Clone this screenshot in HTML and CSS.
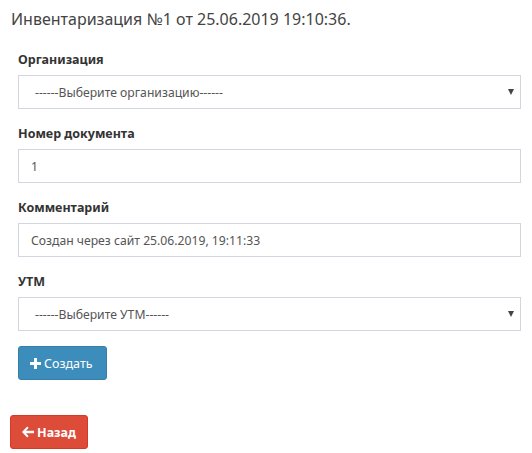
FILE: index.html
```html
<!DOCTYPE html>
<html>
<head>
<meta charset="utf-8">
<link rel="stylesheet" href="styles.css">
</head>
<body>
<div class="page">
  <h1 class="title">Инвентаризация №1 от 25.06.2019 19:10:36.</h1>
  <form class="form">
    <div class="group">
      <label class="label">Организация</label>
      <div class="select"><span>------Выберите организацию------</span><span class="caret"></span></div>
    </div>
    <div class="group">
      <label class="label">Номер документа</label>
      <div class="input">1</div>
    </div>
    <div class="group">
      <label class="label">Комментарий</label>
      <div class="input">Создан через сайт 25.06.2019, 19:11:33</div>
    </div>
    <div class="group">
      <label class="label">УТМ</label>
      <div class="select"><span>------Выберите УТМ------</span><span class="caret"></span></div>
    </div>
    <div class="actions">
      <button type="button" class="btn btn-primary"><svg class="ico" width="11" height="11" viewBox="0 0 11 11"><path d="M4 0h3v4h4v3H7v4H4V7H0V4h4z" fill="#fff"/></svg>Создать</button>
    </div>
  </form>
  <div class="back">
    <button type="button" class="btn btn-danger"><svg class="ico" width="12" height="12" viewBox="0 0 12 12"><path d="M5.2 0.6 L6.6 2 L3.9 4.7 H12 V7.3 H3.9 L6.6 10 L5.2 11.4 L0 6 Z" fill="#fff"/></svg>Назад</button>
  </div>
</div>
</body>
</html>
```
FILE: styles.css
```css
* { box-sizing: border-box; }
html, body { margin: 0; padding: 0; background: #fff; }
body {
  font-family: "Noto Sans", "Open Sans", sans-serif;
  font-size: 12.5px;
  color: #333;
}
.page { padding: 8px 10px 0 10px; }
.title {
  margin: 0 0 0 1px;
  font-size: 16px;
  font-weight: 400;
  line-height: 22px;
  color: #444;
}
.form { padding: 20px 1px 0 8px; }
.group { margin-bottom: 15px; }
.label {
  display: block;
  font-weight: 700;
  font-size: 12.5px;
  line-height: 20px;
  margin-bottom: 5px;
  color: #333;
}
.input, .select {
  height: 34px;
  border: 1px solid #d2d6de;
  padding: 0 12px;
  display: flex;
  align-items: center;
  color: #555;
  font-size: 12.2px;
}
.select { justify-content: space-between; padding: 0 6px 0 16px; }
.caret {
  width: 0; height: 0;
  border-left: 3.5px solid transparent;
  border-right: 3.5px solid transparent;
  border-top: 6px solid #444;
}
.actions { display: flex; }
.btn {
  height: 34px;
  border-radius: 3px;
  font-family: inherit;
  font-size: 12.5px;
  color: #fff;
  display: flex;
  align-items: center;
  gap: 3px;
  cursor: pointer;
}
.btn-primary {
  background: #3c8dbc;
  border: 1px solid #367fa9;
  padding: 0 12px 0 11px;
  width: 89px;
}
.btn-danger {
  background: #dd4b39;
  border: 1px solid #d73925;
  padding: 0 12px 0 11px;
  width: 78px;
  font-weight: 700;
}
.ico { flex: none; }
.back { margin-top: 35px; display: flex; }
```
